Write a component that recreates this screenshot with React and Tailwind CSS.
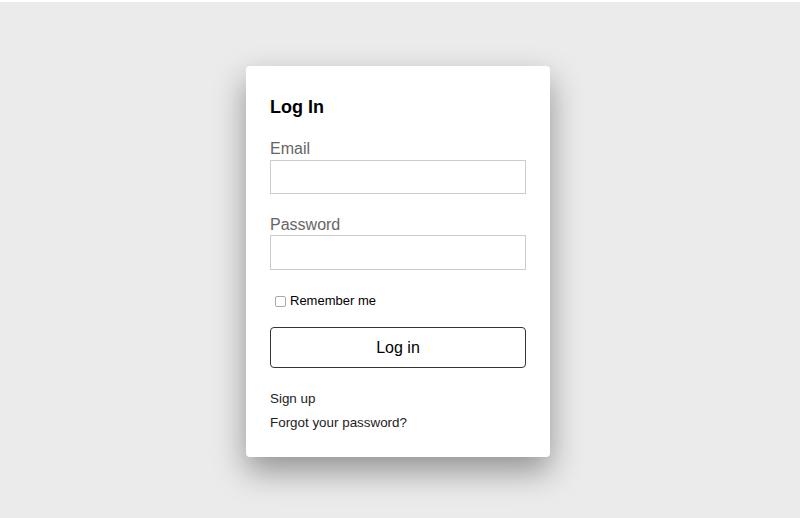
export default function App() {
  return (
    <div className="min-h-[518px] w-full bg-[#ebebeb] border-t-2 border-white pt-[64px] pr-[4px] font-['Helvetica','Liberation_Sans',Arial,sans-serif]">
      <div className="mx-auto w-[304px] bg-white rounded-[4px] shadow-[0_14px_32px_rgba(0,0,0,0.38)] px-6 pt-[29px] pb-[25px]">
        <h1 className="text-[18px] leading-6 font-bold text-black">Log In</h1>

        <label className="block mt-[20px] text-[16px] leading-5 text-[#666]">Email</label>
        <input type="email" className="block mt-[1px] w-[256px] h-[34px] border border-[#cccccc] outline-none" />

        <label className="block mt-[21px] text-[16px] leading-5 text-[#666]">Password</label>
        <input type="password" className="block w-[256px] h-[35px] border border-[#cccccc] outline-none" />

        <label className="mt-[23px] flex items-center h-4 pl-[5px] text-[13px] leading-4 text-black">
          <input type="checkbox" className="w-[11px] h-[11px] mr-[4px] border border-[#aaa] rounded-[2px] appearance-none" />
          Remember me
        </label>

        <button className="mt-[18px] w-[256px] h-[41px] border border-[#333] rounded-[4px] bg-white text-[16px] text-black">
          Log in
        </button>

        <div className="mt-[22px] flex flex-col gap-[6px] text-[13.4px] leading-[18px] text-[#222]">
          <a>Sign up</a>
          <a>Forgot your password?</a>
        </div>
      </div>
    </div>
  );
}
